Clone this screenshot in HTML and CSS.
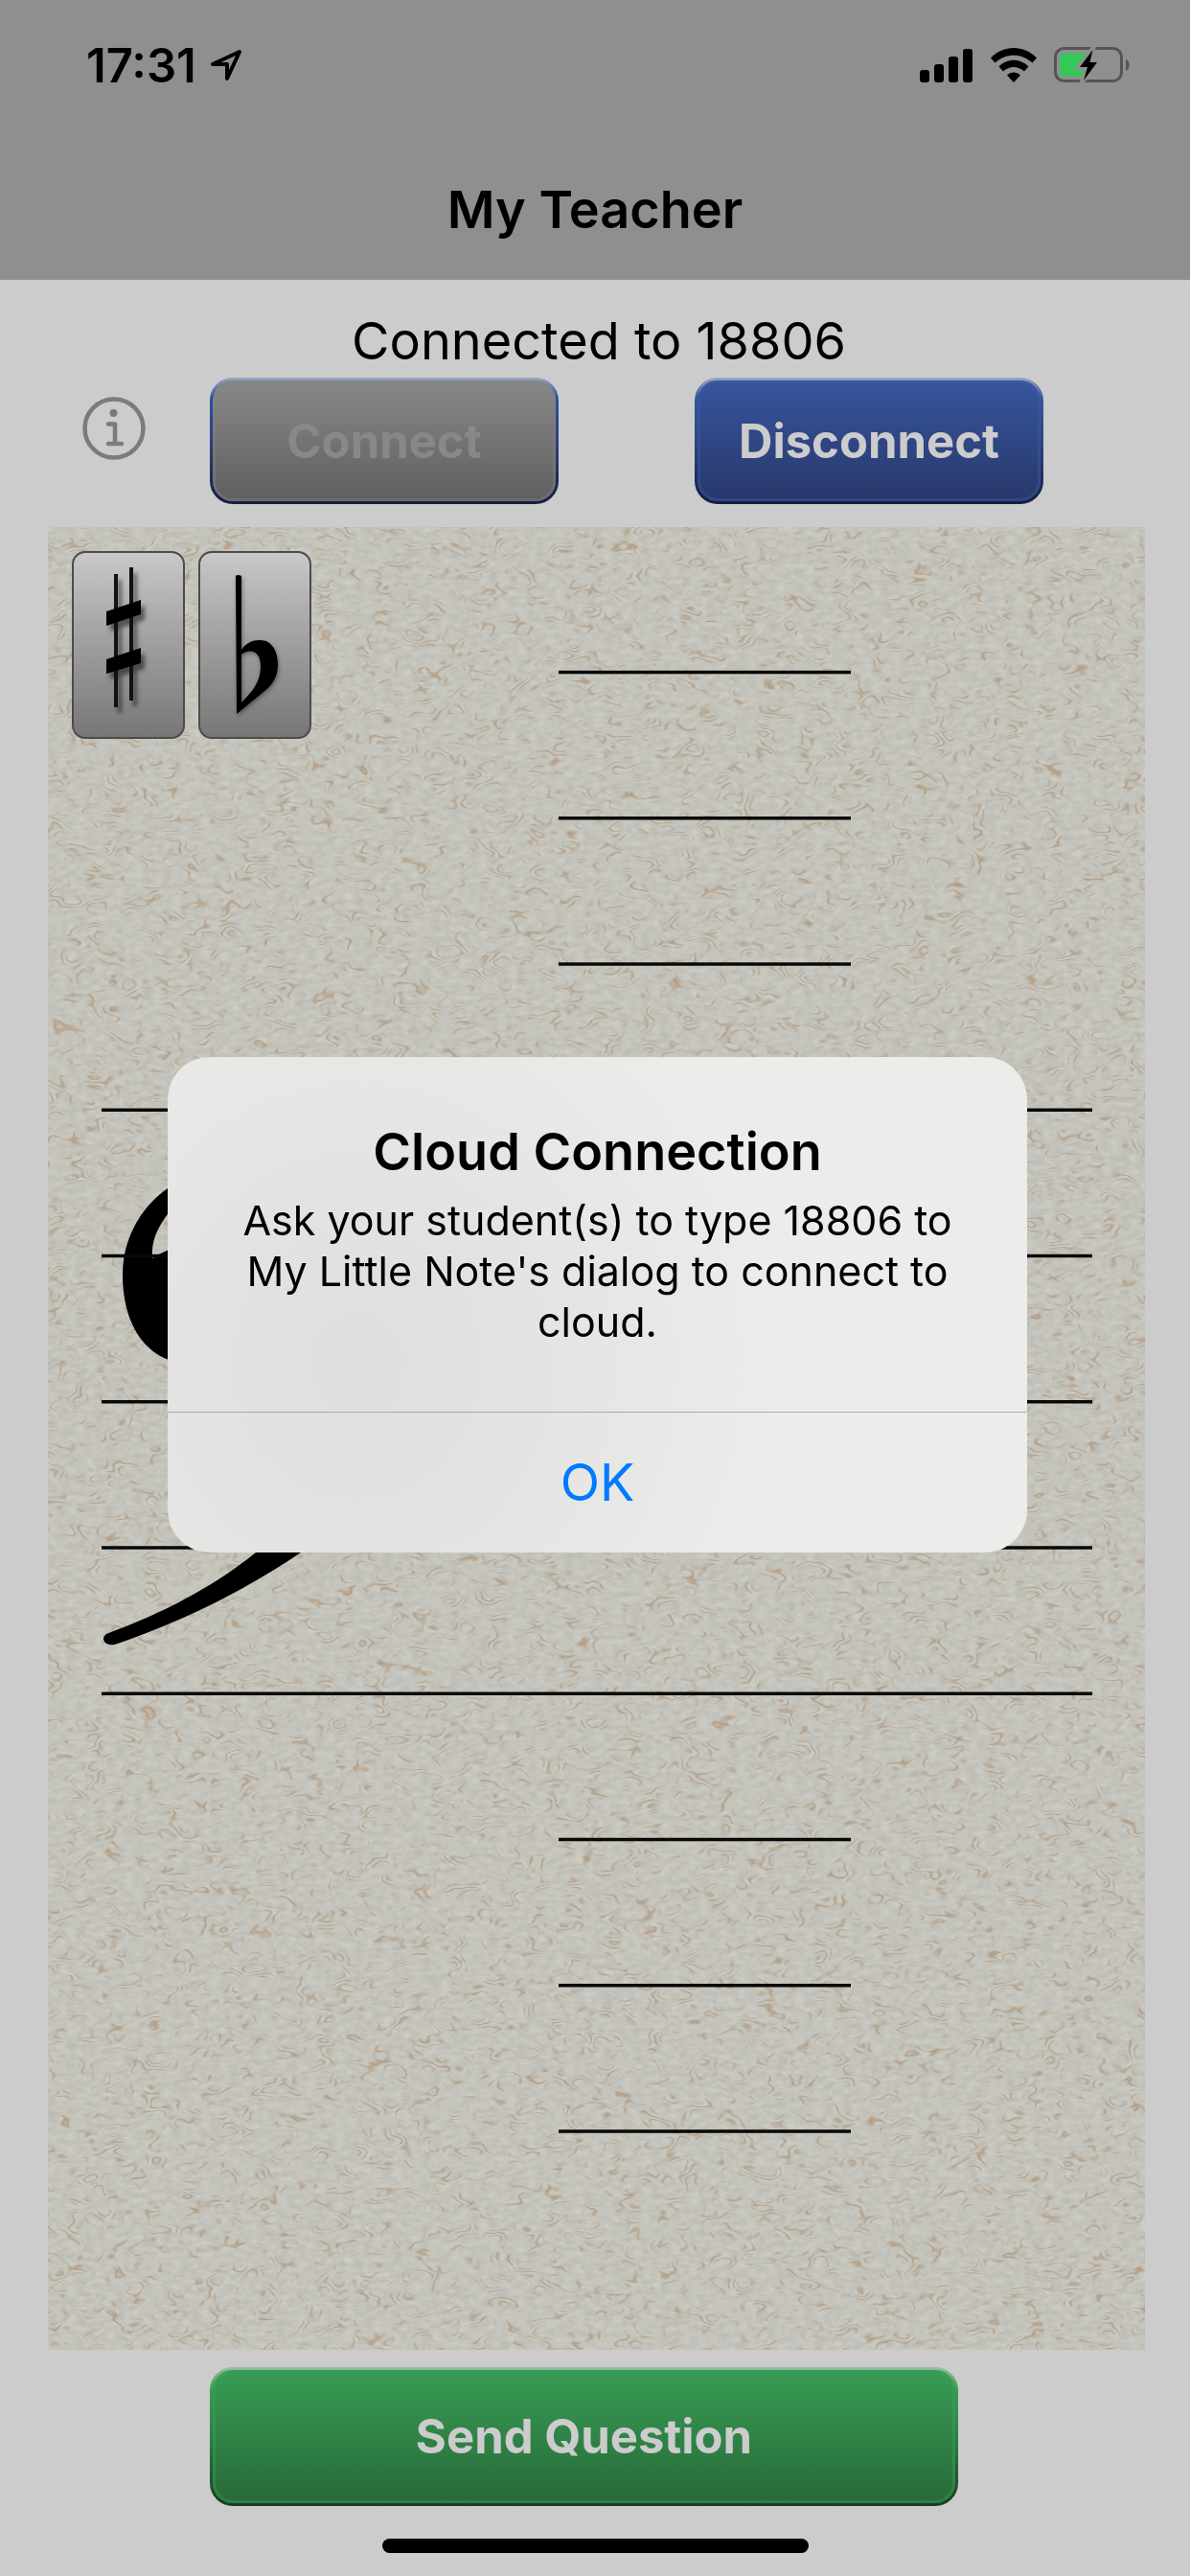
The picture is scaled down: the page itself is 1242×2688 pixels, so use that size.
FILE: index.html
```html
<!DOCTYPE html>
<html lang="en">
<head>
    <meta charset="UTF-8">
    <meta name="viewport" content="width=device-width, initial-scale=1.0">
    <title>My Teacher</title>
    <link rel="stylesheet" href="styles.css">
</head>
<body>

    <!-- Header -->
    <header>
        <div class="status-bar">
            <div class="status-time">
                <span>17:31</span>
                <svg class="location-icon" width="34" height="34" viewBox="0 0 34 34">
                    <path d="M31 3 L3 16 H18 V31 Z" fill="none" stroke="#000" stroke-width="4" stroke-linejoin="round"/>
                </svg>
            </div>
            <div class="status-icons">
                <svg width="56" height="36" viewBox="0 0 56 36">
                    <rect x="0" y="23" width="10" height="13" rx="3"/>
                    <rect x="15" y="17" width="10" height="19" rx="3"/>
                    <rect x="30" y="9" width="10" height="27" rx="3"/>
                    <rect x="45" y="1" width="10" height="35" rx="3"/>
                </svg>
                <svg width="48" height="36" viewBox="0 0 48 36">
                    <path d="M0 10.500 C13 -3.500 35 -3.500 48 10.500 L43.500 15.500 C32 5 16 5 4.500 15.500 Z"/>
                    <path d="M8.500 19.500 C17 10.500 31 10.500 39.500 19.500 L35 24.500 C28.500 18.500 19.500 18.500 13 24.500 Z"/>
                    <path d="M17 28.500 C21 24.500 27 24.500 31 28.500 L24 36 Z"/>
                </svg>
                <svg width="80" height="38" viewBox="0 0 80 38">
                    <rect x="1.500" y="1.500" width="69" height="34" rx="9" fill="none" stroke="#555" stroke-width="3"/>
                    <path d="M75 13 C80 15 80 23 75 25 Z" fill="#555"/>
                    <path d="M10 6.500 H36 L22 23 H31 L29 31 H10 Q6 31 6 27 V10.500 Q6 6.500 10 6.500 Z" fill="#34c759"/>
                    <path d="M42 -1 L25 22 H34 L28 39 L48 14 H38 Z" fill="none" stroke="#8f8f8f" stroke-width="4"/>
                    <path d="M40.500 3 L27 21 H35 L31 35 L45 16 H37.500 Z"/>
                </svg>
            </div>
        </div>
        <h1>My Teacher</h1>
    </header>

    <!-- Main Content -->
    <main>
        <p class="connection-status">Connected to 18806</p>

        <div class="controls">
            <button class="info-btn" aria-label="Info">
                <svg width="66" height="66" viewBox="0 0 66 66">
                    <circle cx="33" cy="33" r="30.500" fill="none" stroke="#7b7b7b" stroke-width="4.500"/>
                    <circle cx="32.500" cy="17" r="4" fill="#7b7b7b"/>
                    <path d="M27 28.500 H34 V49 M27 49 H41" fill="none" stroke="#7b7b7b" stroke-width="4.500" stroke-linecap="round" stroke-linejoin="round"/>
                </svg>
            </button>
            <button class="btn btn-blue" disabled>Connect</button>
            <button class="btn btn-blue">Disconnect</button>
        </div>

        <!-- Staff paper -->
        <div class="sheet">
            <svg class="staff" viewBox="0 0 1145 1902">
                <defs>
                    <filter id="grain" x="0" y="0" width="100%" height="100%" color-interpolation-filters="sRGB">
                        <feTurbulence type="fractalNoise" baseFrequency="0.10 0.18" numOctaves="2" seed="4"/>
                        <feColorMatrix values="0.10 0 0 0 0.718  0.10 0 0 0 0.718  0.10 0 0 0 0.690  0 0 0 0 1"/>
                    </filter>
                    <filter id="fibres" x="0" y="0" width="100%" height="100%" color-interpolation-filters="sRGB">
                        <feTurbulence type="fractalNoise" baseFrequency="0.030 0.050" numOctaves="2" seed="11" result="noise"/>
                        <feColorMatrix in="noise" values="0 0 0 0 0.68  0 0 0 0 0.55  0 0 0 0 0.42  1 0 0 0 0"/>
                        <feComponentTransfer result="curls">
                            <feFuncA type="table" tableValues="0 0 0 0 0 0 0 0 0 0 0 0.600 0 0 0 0.700 0 0 0 0.600 0 0 0 0 0 0 0 0 0"/>
                        </feComponentTransfer>
                        <feTurbulence type="fractalNoise" baseFrequency="0.050 0.070" numOctaves="2" seed="27"/>
                        <feColorMatrix values="0 0 0 0 0  0 0 0 0 0  0 0 0 0 0  0 5 0 0 -2.300" result="mask"/>
                        <feComposite in="curls" in2="mask" operator="in"/>
                        <feGaussianBlur stdDeviation="0.600"/>
                    </filter>
                </defs>
                <rect width="1145" height="1902" filter="url(#grain)"/>
                <rect width="1145" height="1902" filter="url(#fibres)"/>

                <!-- Bass clef -->
                <path d="M78 780 C78 742 97 710 125 690 C150 668 190 655 230 655 C360 655 420 740 420 850 C420 950 350 1020 264 1070 C205 1110 140 1142 70 1166 C60 1168 54 1160 61 1155 C130 1130 180 1100 217 1070 C310 980 330 900 330 820 C330 730 290 685 220 685 C170 685 138 703 125 717 C111 735 108 750 109 763 C190 715 220 770 220 810 C220 850 185 873 150 873 C105 873 78 835 78 780 Z"/>

                <!-- Staff and ledger lines -->
                <g stroke="#080808" stroke-width="3.500">
                    <path d="M533 151.500 H838 M533 303.750 H838 M533 456 H838"/>
                    <path d="M56 608.250 H1090 M56 760.500 H1090 M56 912.750 H1090 M56 1065 H1090 M56 1217.250 H1090"/>
                    <path d="M533 1369.500 H838 M533 1521.750 H838 M533 1674 H838"/>
                </g>
            </svg>

            <div class="accidentals">
                <button class="accidental" aria-label="Sharp">
                    <svg class="sharp" width="118" height="196" viewBox="0 0 118 196">
                        <path d="M46 24 V163 M62 17 V156" fill="none" stroke="#111" stroke-width="4"/>
                        <path d="M36 63 L72 51 V66 L36 78 Z M36 113 L72 101 V117 L36 128 Z"/>
                    </svg>
                </button>
                <button class="accidental" aria-label="Flat">
                    <svg class="flat" width="118" height="196" viewBox="0 0 118 196">
                        <path fill-rule="evenodd" d="M39 26 Q41 24 45 26 V103 C52 93 60 93 65 93 C76 93 83 104 83 118 C83 131 78 139 68 147 L40 170 Z M45 108 V158 C56 147 65 137 65 120 C65 102 52 102 45 108 Z"/>
                    </svg>
                </button>
            </div>
        </div>

        <button class="btn btn-green">Send Question</button>
    </main>

    <div class="home-indicator"></div>

    <!-- Alert dialog -->
    <div class="overlay">
        <div class="alert" role="alertdialog" aria-labelledby="alert-title" aria-describedby="alert-message">
            <div class="alert-body">
                <h2 id="alert-title">Cloud Connection</h2>
                <p id="alert-message">Ask your student(s) to type 18806 to My Little Note's dialog to connect to cloud.</p>
            </div>
            <button class="alert-btn" onclick="closeAlert()">OK</button>
        </div>
    </div>

    <script>
        // Hide the dialog
        function closeAlert() {
            document.querySelector('.overlay').style.display = 'none';
        }
    </script>

</body>
</html>
```
FILE: styles.css
```css
* {
    box-sizing: border-box;
}

body {
    font-family: Inter, 'Liberation Sans', sans-serif;
    margin: 0;
    min-height: 100vh;
    background-color: #ccc;
    color: #000;
}

h1, h2, p {
    margin: 0;
}

button {
    font-family: inherit;
    border: none;
    padding: 0;
    cursor: pointer;
}

svg {
    display: block;
}

/* Header */
header {
    background-color: #8f8f8f;
    text-align: center;
}

.status-bar {
    display: flex;
    justify-content: space-between;
    align-items: center;
    height: 136px;
    padding: 0 62px 0 90px;
}

.status-time {
    display: flex;
    align-items: center;
    gap: 14px;
    font-size: 49px;
    font-weight: 600;
}

.status-icons {
    display: flex;
    align-items: center;
    gap: 18px;
}

header h1 {
    padding: 14px 0 4px;
    font-size: 54px;
    font-weight: 600;
    line-height: 138px;
}

/* Connection controls */
.connection-status {
    padding: 30px 0 4px 8px;
    font-size: 54px;
    line-height: 68px;
    text-align: center;
}

.controls {
    display: flex;
    align-items: center;
    padding: 0 153px 0 86px;
}

.info-btn {
    width: 66px;
    margin: 0 67px 26px 0;
    background: none;
}

.btn {
    border: 3px solid transparent;
    border-radius: 24px;
    color: #ccc;
    font-size: 49px;
    font-weight: 700;
}

.controls .btn {
    flex: 1;
    height: 132px;
}

.controls .btn + .btn {
    margin-left: 142px;
}

.btn-blue {
    background: linear-gradient(#37559d, #28386b) padding-box,
                linear-gradient(#9ba6c0, #37559d 16%, #2d4585 50%, #141f40) border-box;
    box-shadow: inset 0 0 0 3px rgba(64, 96, 170, 0.35);
}

.btn-blue:disabled {
    background: linear-gradient(#888, #5f5f5f) padding-box,
                linear-gradient(#9ba6c0, #2f4f9c 16%, #2a4283 50%, #141f40) border-box;
    box-shadow: inset 0 0 0 3px rgba(130, 130, 130, 0.4);
    color: #888;
    cursor: default;
}

.btn-green {
    display: block;
    width: calc(100% - 461px);
    height: 145px;
    margin: 18px 242px 0 219px;
    background: linear-gradient(#389c54, #276a39) padding-box,
                linear-gradient(#97bea2, #389c54 16%, #2d7e45 50%, #173e22) border-box;
    box-shadow: inset 0 0 0 3px rgba(64, 165, 92, 0.35);
}

/* Staff paper */
.sheet {
    position: relative;
    margin: 24px 47px 0 50px;
    background-color: #c3c4bd;
}

.staff {
    width: 100%;
}

.accidentals {
    position: absolute;
    top: 25px;
    left: 25px;
    display: flex;
    gap: 14px;
}

.accidental {
    border: 2px solid #4b4b4b;
    border-radius: 14px;
    background: linear-gradient(#c8c8c8, #a3a2a1 45%, #787775);
}

.accidental svg {
    margin: -2px;
}

.sharp {
    filter: drop-shadow(4px 6px 2px rgba(0, 0, 0, 0.5));
}

.flat {
    filter: drop-shadow(1px 2px 2px rgba(0, 0, 0, 0.4));
}

.home-indicator {
    width: 445px;
    height: 15px;
    margin: 34px auto 24px;
    border-radius: 8px;
    background-color: #000;
}

/* Alert dialog */
.overlay {
    position: fixed;
    inset: 0;
    display: flex;
    align-items: center;
    padding: 34px 170px 0 175px;
}

.alert {
    flex: 1;
    border-radius: 44px;
    background: radial-gradient(ellipse 440px 480px at 22% 62%, #dededc, #e3e3e1 40%, #ecedea) #ecedea;
    text-align: center;
    overflow: hidden;
}

.alert-body {
    padding: 66px 60px 67px;
    border-bottom: 1px solid #aaa;
}

.alert h2 {
    margin-bottom: 12px;
    font-size: 54px;
    font-weight: 600;
    line-height: 66px;
}

.alert p {
    font-size: 43px;
    line-height: 53px;
}

.alert-btn {
    width: 100%;
    height: 146px;
    background: none;
    color: #007aff;
    font-size: 54px;
}
```
